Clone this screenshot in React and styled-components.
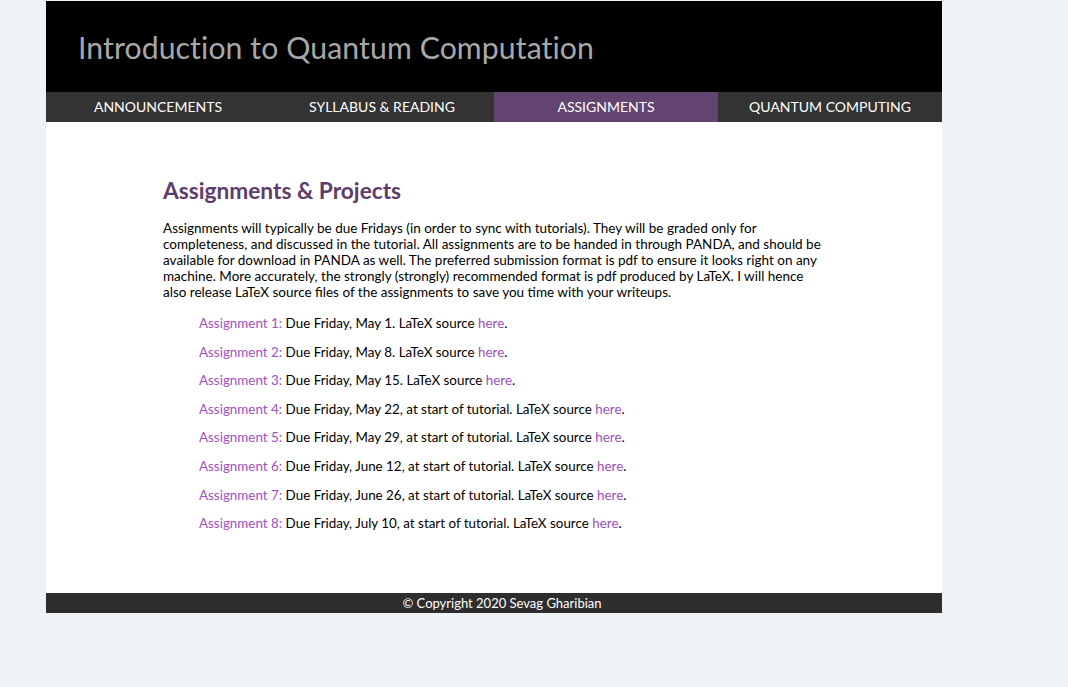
import React from "react";
import styled, { createGlobalStyle } from "styled-components";

const Global = createGlobalStyle`
  html, body {
    margin: 0;
    padding: 0;
    background: #eef3f8;
  }
  body {
    font-family: "Gill Sans", "Gill Sans MT", Lato, "Liberation Sans", sans-serif;
  }
`;

const Page = styled.div`
  width: 896px;
  margin: 1px 0 0 46px;
  background: #ffffff;
`;

const Header = styled.header`
  height: 91px;
  background: #000000;
  display: flex;
  align-items: center;
  padding-left: 32px;
  box-sizing: border-box;
`;

const Title = styled.h1`
  margin: 0;
  font-weight: 400;
  font-size: 30.2px;
  color: #a8a8a8;
  letter-spacing: 0.1px;
`;

const Nav = styled.nav`
  display: grid;
  grid-template-columns: repeat(4, 1fr);
  height: 30px;
  background: #333333;
`;

const Tab = styled.a`
  display: flex;
  align-items: center;
  justify-content: center;
  padding-bottom: 2px;
  color: #ffffff;
  font-size: 14px;
  text-decoration: none;
  background: ${(p) => (p.$active ? "#634370" : "transparent")};
`;

const Main = styled.main`
  padding: 55px 117px 62px 117px;
`;

const Heading = styled.h2`
  margin: 0 0 15px;
  font-size: 22.7px;
  font-weight: 700;
  color: #5e3c6c;
  line-height: 28px;
`;

const Intro = styled.p`
  margin: 0 0 15px;
  font-size: 13.5px;
  line-height: 16px;
  color: #000000;
`;

const List = styled.ul`
  list-style: none;
  margin: 0;
  padding: 0 0 0 36px;
  display: flex;
  flex-direction: column;
  gap: 12.6px;
`;

const Item = styled.li`
  font-size: 13.4px;
  line-height: 16px;
  color: #000000;
`;

const Label = styled.span`
  color: #a150c3;
`;

const Link = styled.a`
  color: #9a4fc0;
  text-decoration: none;
`;

const Footer = styled.footer`
  height: 20px;
  background: #2e2e2e;
  color: #ffffff;
  font-size: 13px;
  display: flex;
  align-items: center;
  justify-content: center;
  padding-left: 16px;
`;

const tabs = [
  { label: "ANNOUNCEMENTS" },
  { label: "SYLLABUS & READING" },
  { label: "ASSIGNMENTS", active: true },
  { label: "QUANTUM COMPUTING" },
];

const assignments = [
  "Due Friday, May 1.",
  "Due Friday, May 8.",
  "Due Friday, May 15.",
  "Due Friday, May 22, at start of tutorial.",
  "Due Friday, May 29, at start of tutorial.",
  "Due Friday, June 12, at start of tutorial.",
  "Due Friday, June 26, at start of tutorial.",
  "Due Friday, July 10, at start of tutorial.",
];

export default function App() {
  return (
    <>
      <Global />
      <Page>
        <Header>
          <Title>Introduction to Quantum Computation</Title>
        </Header>
        <Nav>
          {tabs.map((t) => (
            <Tab key={t.label} href="#" $active={t.active}>
              {t.label}
            </Tab>
          ))}
        </Nav>
        <Main>
          <Heading>Assignments &amp; Projects</Heading>
          <Intro>
            Assignments will typically be due Fridays (in order to sync with
            tutorials). They will be graded only for completeness, and
            discussed in the tutorial. All assignments are to be handed in
            through PANDA, and should be available for download in PANDA as
            well. The preferred submission format is pdf to ensure it looks
            right on any machine. More accurately, the strongly (strongly)
            recommended format is pdf produced by LaTeX. I will hence also
            release LaTeX source files of the assignments to save you time with
            your writeups.
          </Intro>
          <List>
            {assignments.map((a, i) => (
              <Item key={i}>
                <Label>Assignment {i + 1}:</Label> {a} LaTeX source{" "}
                <Link href="#">here</Link>.
              </Item>
            ))}
          </List>
        </Main>
        <Footer>© Copyright 2020 Sevag Gharibian</Footer>
      </Page>
    </>
  );
}
